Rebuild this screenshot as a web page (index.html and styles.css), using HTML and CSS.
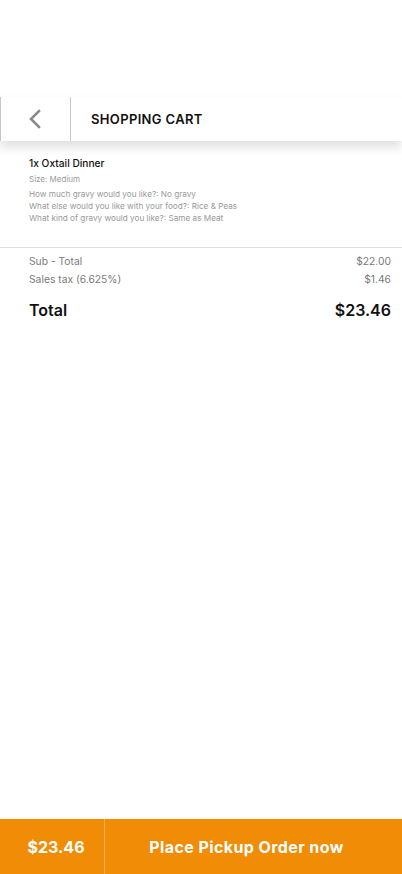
FILE: index.html
```html
<!DOCTYPE html>
<html>
<head>
<meta charset="utf-8">
<link rel="stylesheet" href="styles.css">
</head>
<body>
<div class="page">
  <div class="top-space"></div>
  <header class="header">
    <div class="back">
      <svg width="16" height="20" viewBox="0 0 16 20"><path d="M12 2 L4 10 L12 18" fill="none" stroke="#8a8a8a" stroke-width="2.6" stroke-linecap="square"/></svg>
    </div>
    <div class="title">SHOPPING CART</div>
  </header>
  <section class="item">
    <div class="item-name">1x Oxtail Dinner</div>
    <div class="item-size">Size: Medium</div>
    <div class="item-opts">
      <div>How much gravy would you like?: No gravy</div>
      <div>What else would you like with your food?: Rice &amp; Peas</div>
      <div>What kind of gravy would you like?: Same as Meat</div>
    </div>
  </section>
  <section class="totals">
    <div class="row"><span>Sub - Total</span><span>$22.00</span></div>
    <div class="row"><span>Sales tax (6.625%)</span><span>$1.46</span></div>
    <div class="row total"><span>Total</span><span>$23.46</span></div>
  </section>
  <footer class="footer">
    <div class="f-price">$23.46</div>
    <div class="f-action">Place Pickup Order now</div>
  </footer>
</div>
</body>
</html>
```
FILE: styles.css
```css
* { box-sizing: border-box; }
html, body { margin: 0; padding: 0; background: #fff; }
body { font-family: "Inter", "Open Sans", sans-serif; color: #111; }
.page { height: 874px; display: flex; flex-direction: column; }
.top-space { height: 97px; }
.header {
  height: 44px;
  display: flex;
  align-items: stretch;
  border-left: 1px solid #c8c8c8;
  box-shadow: 0 6px 10px rgba(0,0,0,0.13);
}
.back {
  width: 70px;
  border-right: 1px solid #c8c8c8;
  display: flex;
  align-items: center;
  justify-content: center;
  padding-right: 2px;
}
.title {
  display: flex;
  align-items: center;
  padding-left: 20px;
  font-size: 13px;
  font-weight: 600;
  letter-spacing: 0.35px;
}
.item { padding: 15px 29px 23px; border-bottom: 1px solid #dedede; }
.item-name { font-size: 10.2px; font-weight: 500; line-height: 14px; }
.item-size { font-size: 8px; color: #9a9a9a; line-height: 12px; margin-top: 3px; }
.item-opts { margin-top: 3px; font-size: 8.2px; color: #999; line-height: 12px; }
.totals { padding: 4px 11px 0 29px; }
.row { display: flex; justify-content: space-between; font-size: 10.3px; color: #7a7a7a; line-height: 18px; }
.row.total { font-size: 16px; font-weight: 600; color: #111; margin-top: 10px; line-height: 24px; }
.footer {
  margin-top: auto;
  height: 55px;
  background: #f08c05;
  display: flex;
  color: #fff;
  font-weight: 700;
}
.f-price {
  width: 105px;
  border-right: 1px solid #f5b050;
  display: flex;
  align-items: center;
  justify-content: center;
  font-size: 16px;
  padding-left: 8px;
}
.f-action {
  flex: 1;
  display: flex;
  align-items: center;
  justify-content: center;
  font-size: 16px;
  letter-spacing: 0.4px;
  padding-right: 14px;
}
```
